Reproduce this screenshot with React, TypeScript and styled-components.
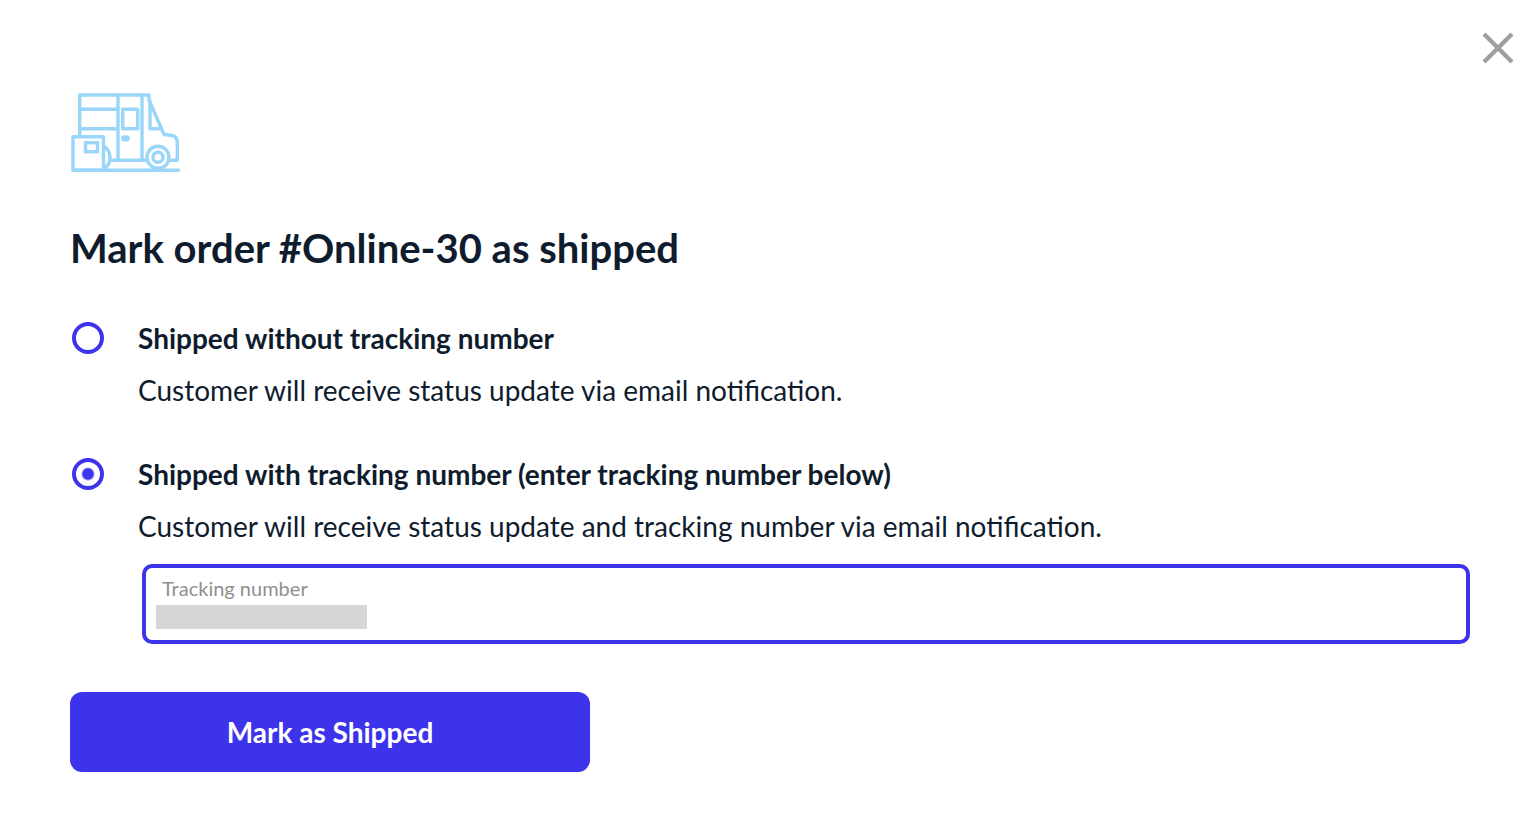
import React, { useState } from "react";
import styled, { createGlobalStyle } from "styled-components";

const ink = "#0f1c2e";
const accent = "#3d33eb";

const GlobalStyle = createGlobalStyle`
  *, *::before, *::after { box-sizing: border-box; }
  body {
    margin: 0;
    background: #fff;
    color: ${ink};
    font-family: Lato, "Liberation Sans", sans-serif;
  }
`;

const Dialog = styled.main`
  position: relative;
  padding: 92px 70px 54px;
`;

const CloseButton = styled.button`
  position: absolute;
  top: 32px;
  right: 26px;
  width: 32px;
  height: 32px;
  padding: 0;
  border: 0;
  background: none;
  cursor: pointer;

  svg { display: block; }
`;

const Illustration = styled.svg`
  display: block;
  width: 112px;
  height: 84px;
  fill: none;
  stroke: #99d6f9;
  stroke-width: 3.4;
  stroke-linecap: round;
  stroke-linejoin: round;
`;

const Title = styled.h1`
  margin: 48px 0 0;
  font-size: 40px;
  line-height: 48px;
  font-weight: 700;
`;

const Options = styled.form`
  display: flex;
  flex-direction: column;
`;

const Option = styled.div`
  display: grid;
  grid-template-columns: 32px minmax(0, 1fr);
  column-gap: 34px;
  margin-top: 48px;
  padding-left: 2px;
`;

const Radio = styled.input`
  appearance: none;
  width: 32px;
  height: 32px;
  margin: 2px 0 0;
  border: 4px solid ${accent};
  border-radius: 50%;
  background: #fff;
  cursor: pointer;

  &:checked {
    background: radial-gradient(circle, ${accent} 0 5px, #fff 7px);
  }
`;

const OptionLabel = styled.label`
  display: block;
  font-size: 28px;
  line-height: 36px;
  font-weight: 700;
  cursor: pointer;
`;

const Description = styled.p`
  margin: 16px 0 0;
  font-size: 28px;
  line-height: 36px;
`;

const Field = styled.div`
  position: relative;
  display: flex;
  flex-direction: column;
  height: 80px;
  margin: 20px 0 0 4px;
  padding: 8px 16px 0;
  border: 4px solid ${accent};
  border-radius: 10px;
`;

const FieldLabel = styled.label`
  color: #8f8f8f;
  font-size: 20px;
  line-height: 24px;
`;

const FieldInput = styled.input`
  width: 100%;
  height: 32px;
  padding: 0;
  border: 0;
  outline: 0;
  background: transparent;
  color: ${ink};
  font: inherit;
  font-size: 28px;
`;

const Redaction = styled.span`
  position: absolute;
  left: 10px;
  bottom: 11px;
  width: 211px;
  height: 24px;
  background: #d6d6d6;
  pointer-events: none;
`;

const SubmitButton = styled.button`
  width: 520px;
  max-width: 100%;
  height: 80px;
  margin-top: 48px;
  padding: 0;
  border: 0;
  border-radius: 12px;
  background: ${accent};
  color: #fff;
  font: inherit;
  font-size: 28px;
  line-height: 36px;
  font-weight: 700;
  cursor: pointer;
`;

function DeliveryVan() {
  return (
    <Illustration viewBox="0 2 112 84" aria-hidden="true">
      <path d="M9.7 46V5H79v5l15 34.5 7 .8c4 .6 6.3 3.2 6.3 7.2v17.8H100" />
      <path d="M48 5v65.3M72 5v65.3M9.7 19.3H48M9.7 38.7H48M40.7 70.3H76" />
      <path d="M80 11v27.7h10.5" />
      <rect x="52.7" y="19.3" width="15" height="19.5" />
      <rect x="53" y="47" width="5" height="2.8" rx="1" />
      <circle cx="88" cy="67.3" r="11" />
      <circle cx="88" cy="67.3" r="5" />
      <path d="M34 56.5c8 4.5 8 17.5 0 22" />
      <rect x="3" y="46.7" width="30.5" height="33.5" />
      <rect x="15.5" y="52.7" width="12" height="9" strokeLinejoin="miter" />
      <path d="M3 80.2h105.5" />
    </Illustration>
  );
}

export default function App() {
  const [method, setMethod] = useState("with");
  const [tracking, setTracking] = useState("");

  return (
    <>
      <GlobalStyle />
      <Dialog>
        <CloseButton type="button" aria-label="Close">
          <svg width="32" height="32" viewBox="0 0 32 32" fill="none" stroke="#a0a0a0" strokeWidth="4.4">
            <path d="M2 2l28 28M30 2L2 30" />
          </svg>
        </CloseButton>
        <DeliveryVan />
        <Title>Mark order #Online-30 as shipped</Title>
        <Options onSubmit={(e) => e.preventDefault()}>
          <Option>
            <Radio
              type="radio"
              id="without"
              name="method"
              checked={method === "without"}
              onChange={() => setMethod("without")}
            />
            <div>
              <OptionLabel htmlFor="without">Shipped without tracking number</OptionLabel>
              <Description>Customer will receive status update via email notification.</Description>
            </div>
          </Option>
          <Option>
            <Radio
              type="radio"
              id="with"
              name="method"
              checked={method === "with"}
              onChange={() => setMethod("with")}
            />
            <div>
              <OptionLabel htmlFor="with">
                Shipped with tracking number (enter tracking number below)
              </OptionLabel>
              <Description>
                Customer will receive status update and tracking number via email notification.
              </Description>
              <Field>
                <FieldLabel htmlFor="tracking">Tracking number</FieldLabel>
                <FieldInput
                  id="tracking"
                  type="text"
                  value={tracking}
                  onChange={(e) => setTracking(e.target.value)}
                />
                {tracking === "" && <Redaction />}
              </Field>
            </div>
          </Option>
          <SubmitButton type="submit">Mark as Shipped</SubmitButton>
        </Options>
      </Dialog>
    </>
  );
}
